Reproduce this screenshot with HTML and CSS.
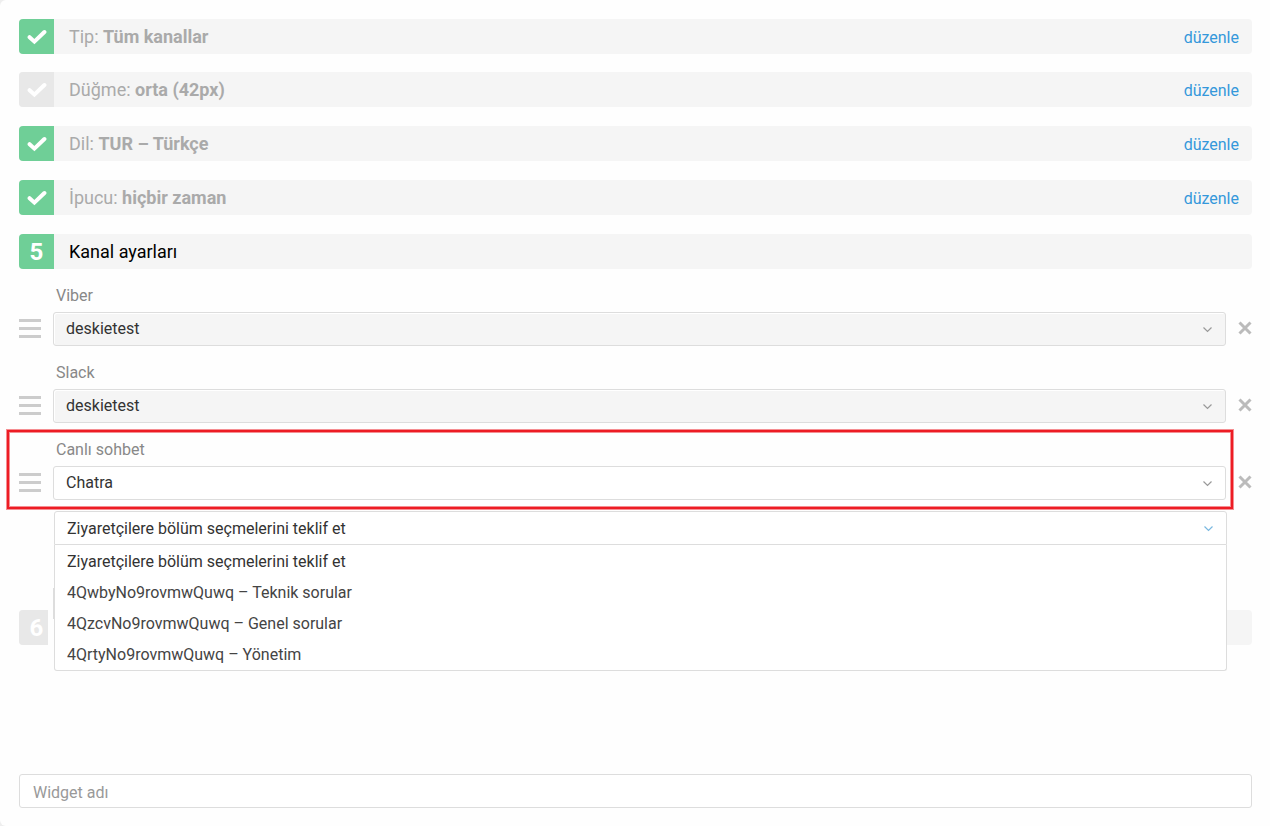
FILE: index.html
```html
<!DOCTYPE html>
<html lang="tr">
<head>
  <meta charset="UTF-8">
  <meta name="viewport" content="width=device-width, initial-scale=1.0">
  <title>Kanal ayarları</title>
  <link rel="stylesheet" href="styles.css">
</head>
<body>

<svg class="symbols" aria-hidden="true">
  <symbol id="check" viewBox="0 0 20 16"><path d="M2.6 8.2 L7.4 12.6 L17.4 3" fill="none" stroke="currentColor" stroke-width="4" stroke-linecap="round"/></symbol>
  <symbol id="chevron" viewBox="0 0 9 6"><path d="M0.5 0.5 L4.5 4.5 L8.5 0.5" fill="none" stroke="currentColor" stroke-width="1.2"/></symbol>
  <symbol id="cross" viewBox="0 0 14 14"><path d="M1.5 1.5 L12.5 12.5 M12.5 1.5 L1.5 12.5" fill="none" stroke="currentColor" stroke-width="3"/></symbol>
</svg>

<form class="panel">
  <div class="step">
    <span class="mark done"><svg class="check"><use href="#check"/></svg></span>
    <span class="title">Tip: <b>Tüm kanallar</b></span>
    <a class="edit" href="#">düzenle</a>
  </div>
  <div class="step">
    <span class="mark"><svg class="check"><use href="#check"/></svg></span>
    <span class="title">Düğme: <b>orta (42px)</b></span>
    <a class="edit" href="#">düzenle</a>
  </div>
  <div class="step">
    <span class="mark done"><svg class="check"><use href="#check"/></svg></span>
    <span class="title">Dil: <b>TUR – Türkçe</b></span>
    <a class="edit" href="#">düzenle</a>
  </div>
  <div class="step">
    <span class="mark done"><svg class="check"><use href="#check"/></svg></span>
    <span class="title">İpucu: <b>hiçbir zaman</b></span>
    <a class="edit" href="#">düzenle</a>
  </div>
  <div class="step current">
    <span class="mark done">5</span>
    <span class="title">Kanal ayarları</span>
  </div>

  <div class="channels">
    <div class="channel">
      <label for="viber">Viber</label>
      <div class="row">
        <button class="drag" type="button" aria-label="Taşı"><i></i><i></i><i></i></button>
        <div class="select filled">
          <select id="viber"><option>deskietest</option></select>
          <svg class="chevron"><use href="#chevron"/></svg>
        </div>
        <button class="remove" type="button" aria-label="Sil"><svg><use href="#cross"/></svg></button>
      </div>
    </div>
    <div class="channel">
      <label for="slack">Slack</label>
      <div class="row">
        <button class="drag" type="button" aria-label="Taşı"><i></i><i></i><i></i></button>
        <div class="select filled">
          <select id="slack"><option>deskietest</option></select>
          <svg class="chevron"><use href="#chevron"/></svg>
        </div>
        <button class="remove" type="button" aria-label="Sil"><svg><use href="#cross"/></svg></button>
      </div>
    </div>
    <div class="channel highlight">
      <label for="chat">Canlı sohbet</label>
      <div class="row">
        <button class="drag" type="button" aria-label="Taşı"><i></i><i></i><i></i></button>
        <div class="select">
          <select id="chat"><option>Chatra</option></select>
          <svg class="chevron"><use href="#chevron"/></svg>
        </div>
        <button class="remove" type="button" aria-label="Sil"><svg><use href="#cross"/></svg></button>
      </div>
    </div>
  </div>

  <div class="department">
    <div class="select open">
      <select aria-label="Bölüm"><option>Ziyaretçilere bölüm seçmelerini teklif et</option></select>
      <svg class="chevron"><use href="#chevron"/></svg>
    </div>
    <ul class="menu">
      <li><button class="option selected" type="button">Ziyaretçilere bölüm seçmelerini teklif et</button></li>
      <li><button class="option" type="button">4QwbyNo9rovmwQuwq – Teknik sorular</button></li>
      <li><button class="option" type="button">4QzcvNo9rovmwQuwq – Genel sorular</button></li>
      <li><button class="option" type="button">4QrtyNo9rovmwQuwq – Yönetim</button></li>
    </ul>
  </div>

  <div class="step next">
    <span class="mark">6</span>
  </div>

  <input class="name" type="text" placeholder="Widget adı" aria-label="Widget adı">
</form>

</body>
</html>
```

FILE: styles.css
```css
* {
  box-sizing: border-box;
}

body {
  margin: 0;
  background: #eee;
  font-family: Roboto, "Liberation Sans", sans-serif;
  font-size: 16px;
  line-height: 20px;
  color: #333;
}

button, input, select {
  margin: 0;
  font: inherit;
  color: inherit;
}

.symbols {
  position: absolute;
  width: 0;
  height: 0;
}

.panel {
  display: flex;
  flex-direction: column;
  min-height: 100vh;
  padding: 19px 18px 18px 19px;
  background: #fefefe;
  border-radius: 6px 0 0 6px;
}

/* steps */
.step {
  display: flex;
  align-items: center;
  height: 35px;
  margin-bottom: 19px;
  padding-right: 13px;
  background: #f5f5f5;
  border-radius: 4px;
  font-size: 18px;
  color: #aaa;
}

.step:first-child {
  margin-bottom: 18px;
}

.step.current {
  margin-bottom: 16px;
  color: #000;
}

.step.next {
  margin-top: 65px;
}

.mark {
  display: flex;
  align-items: center;
  justify-content: center;
  width: 35px;
  height: 35px;
  background: #e8e8e8;
  border-radius: 4px 0 0 4px;
  font-size: 24px;
  font-weight: bold;
  color: #fff;
}

.mark.done {
  background: #6fcf97;
}

.check {
  width: 20px;
  height: 16px;
}

.title {
  flex: 1;
  margin-left: 15px;
}

.edit {
  padding-top: 2px;
  font-size: 16px;
  color: #3498db;
  text-decoration: none;
}

/* channels */
.channels {
  display: flex;
  flex-direction: column;
  gap: 16px;
}

.channel label {
  display: block;
  padding-top: 1px;
  margin: 0 0 6px 37px;
  color: #888;
}

.row {
  display: flex;
  align-items: center;
}

.drag, .remove {
  padding: 0 0 2px;
  border: 0;
  background: none;
  cursor: pointer;
}

.drag {
  display: flex;
  flex-direction: column;
  gap: 5px;
  width: 22px;
  margin-right: 12px;
}

.drag i {
  height: 3px;
  background: #ccc;
}

.remove {
  width: 14px;
  margin-left: 12px;
  color: #bbb;
}

.remove svg {
  display: block;
  width: 14px;
  height: 14px;
}

.select {
  position: relative;
  flex: 1;
}

.select select {
  display: block;
  width: 100%;
  height: 34px;
  padding: 0 12px;
  border: 1px solid #ddd;
  border-radius: 3px;
  background: #fff;
  appearance: none;
}

.filled select {
  background: #f5f5f5;
  box-shadow: inset 1px 1px 0 #fff;
}

.chevron {
  position: absolute;
  top: 15px;
  right: 14px;
  width: 9px;
  height: 6px;
  color: #999;
  pointer-events: none;
}

.highlight {
  position: relative;
}

.highlight::after {
  content: "";
  position: absolute;
  inset: -9px 19px -9px -12px;
  border: 2px solid #ed1c24;
  box-shadow: 0 0 0 1px #f58e92, inset 0 0 0 1px #f58e92;
  pointer-events: none;
}

/* department list */
.department {
  position: relative;
  margin: 11px 25px 0 35px;
}

.open select {
  padding-top: 1px;
  border-radius: 3px 3px 0 0;
}

.open .chevron {
  color: #7ab8e0;
}

.menu {
  position: absolute;
  top: 34px;
  left: 0;
  right: 0;
  margin: 0;
  padding: 1px 0 0;
  border: 1px solid #ddd;
  border-top: 0;
  border-radius: 0 0 3px 3px;
  background: #fff;
  list-style: none;
}

/* gutter that separates the open list from the step below */
.menu::before {
  content: "";
  position: absolute;
  top: 0;
  bottom: 0;
  left: -7px;
  width: 6px;
  background: #fefefe;
}

.menu::after {
  content: "";
  position: absolute;
  top: 43px;
  left: -2px;
  width: 1px;
  height: 31px;
  background: #ddd;
}

.option {
  display: block;
  width: 100%;
  height: 31px;
  padding: 0 12px;
  border: 0;
  background: none;
  color: #444;
  text-align: left;
}

.option.selected {
  color: #333;
}

.name {
  width: 100%;
  height: 34px;
  margin-top: auto;
  padding: 2px 13px 0;
  border: 1px solid #ddd;
  border-radius: 3px;
  background: #fff;
}

.name::placeholder {
  color: #999;
}
```
